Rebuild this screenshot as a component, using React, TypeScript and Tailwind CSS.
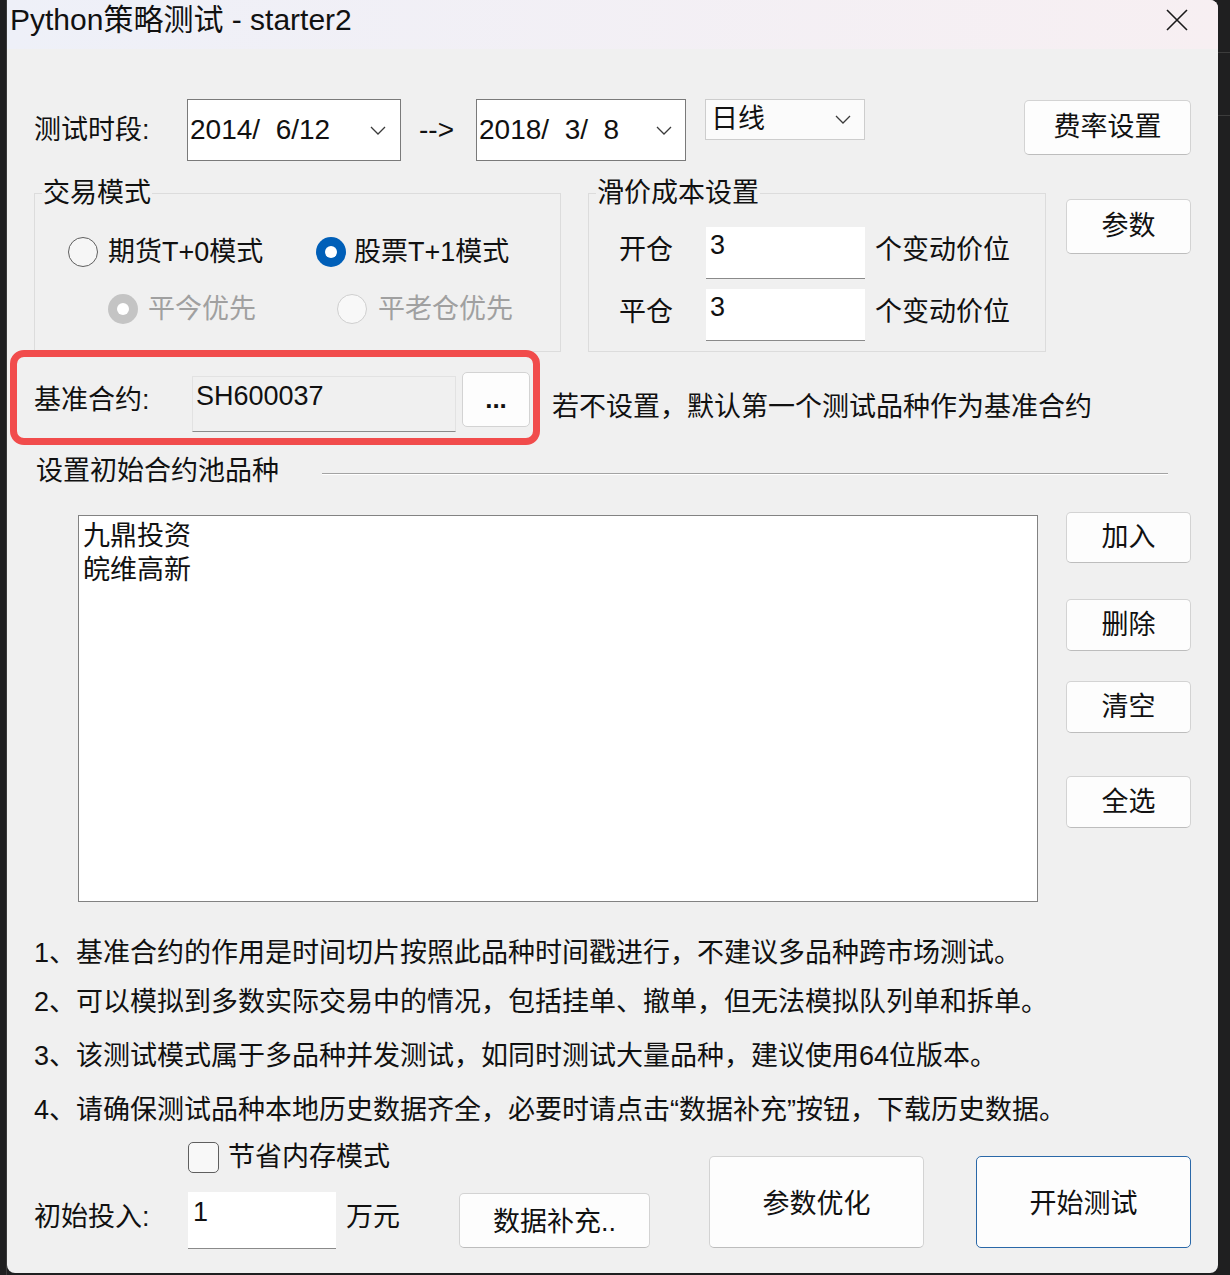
import React from 'react';

const FONT = "font-['Liberation_Sans','Noto_Sans_CJK_SC',sans-serif]";

function Chevron() {
  return (
    <svg width="16" height="9" viewBox="0 0 16 9">
      <polyline points="1,1 8,8 15,1" fill="none" stroke="#3a3a3a" strokeWidth="1.3" />
    </svg>
  );
}

function Btn({ label, className }: { label: string; className: string }) {
  return (
    <button
      className={`${className} bg-[#fdfdfd] border border-[#d3d3d3] border-b-[#bdbdbd] rounded-[5px] text-[27px] text-[#111] flex items-center justify-center`}
    >
      {label}
    </button>
  );
}

function Radio({ checked, disabled }: { checked?: boolean; disabled?: boolean }) {
  if (checked) {
    return (
      <span
        className={`w-[30px] h-[30px] rounded-full flex items-center justify-center shrink-0 ${
          disabled ? 'bg-[#c4c4c4]' : 'bg-[#005fb8]'
        }`}
      >
        <span className="w-[12px] h-[12px] rounded-full bg-white" />
      </span>
    );
  }
  return (
    <span
      className={`w-[30px] h-[30px] rounded-full shrink-0 border-[1.5px] ${
        disabled ? 'border-[#cfcfcf] bg-[#f8f8f8]' : 'border-[#5f5f5f] bg-[#f6f6f6]'
      }`}
    />
  );
}

function SlipRow({ label, mt }: { label: string; mt: string }) {
  return (
    <div className={`flex items-center ${mt} pl-[30px]`}>
      <span className="w-[87px] text-[27px] -mt-[6px]">{label}</span>
      <div className="w-[159px] h-[52px] bg-white border-b border-[#8a8a8a] pl-[4px] pt-[3px] text-[27px] leading-[30px]">
        3
      </div>
      <span className="ml-[10px] text-[27px] -mt-[6px]">个变动价位</span>
    </div>
  );
}

export default function App() {
  return (
    <div className={`w-[1230px] h-[1275px] bg-[#1f1f20] flex ${FONT} text-[#111]`}>
      <div className="w-[7px] shrink-0 border-r border-[#3a3a3a]" />

      <div className="w-[1211px] h-[1273px] shrink-0 bg-[#f0f0f0] rounded-tr-[8px] rounded-b-[8px] overflow-hidden flex flex-col">
        {/* title bar */}
        <div className="h-[49px] flex items-start justify-between bg-linear-to-r from-[#eef0f8] to-[#f7eff2]">
          <span className="pl-[3px] pt-[3px] text-[30px] leading-[34px]">Python策略测试 - starter2</span>
          <svg width="22" height="22" viewBox="0 0 22 22" className="mt-[9px] mr-[30px]">
            <path d="M1 1 L21 21 M21 1 L1 21" stroke="#1a1a1a" strokeWidth="1.6" />
          </svg>
        </div>

        {/* date range row */}
        <div className="flex items-start mt-[50px] pl-[27px]">
          <span className="w-[153px] h-[62px] flex items-center text-[27px]">测试时段:</span>
          <div className="w-[214px] h-[62px] bg-white border border-[#7a7a7a] flex items-center justify-between pl-[2px] pr-[14px]">
            <span className="text-[28px] whitespace-pre">2014/  6/12</span>
            <Chevron />
          </div>
          <span className="w-[75px] h-[62px] flex items-center pl-[18px] text-[28px]">--&gt;</span>
          <div className="w-[210px] h-[62px] bg-white border border-[#7a7a7a] flex items-center justify-between pl-[2px] pr-[13px]">
            <span className="text-[28px] whitespace-pre">2018/  3/  8</span>
            <Chevron />
          </div>
          <div className="ml-[19px] w-[160px] h-[41px] bg-[#fbfbfb] border border-[#cdcdcd] flex items-center justify-between pl-[5px] pr-[13px]">
            <span className="text-[27px]">日线</span>
            <Chevron />
          </div>
          <Btn label="费率设置" className="ml-[159px] mt-[1px] w-[167px] h-[55px]" />
        </div>

        {/* group boxes */}
        <div className="flex items-start mt-[17px] pl-[27px]">
          <fieldset className="w-[527px] h-[174px] border border-[#dcdcdc]">
            <legend className="ml-[7px] px-[1px] text-[27px] leading-[30px]">交易模式</legend>
            <div className="flex items-center mt-[29px] pl-[33px] leading-[30px]">
              <div className="w-[248px] flex items-center gap-[10px]">
                <Radio />
                <span className="text-[27px]">期货T+0模式</span>
              </div>
              <div className="flex items-center gap-[8px]">
                <Radio checked />
                <span className="text-[27px]">股票T+1模式</span>
              </div>
            </div>
            <div className="flex items-center mt-[27px] pl-[73px] leading-[30px] text-[#a0a0a0]">
              <div className="w-[229px] flex items-center gap-[10px]">
                <Radio checked disabled />
                <span className="text-[27px]">平今优先</span>
              </div>
              <div className="flex items-center gap-[11px]">
                <Radio disabled />
                <span className="text-[27px]">平老仓优先</span>
              </div>
            </div>
          </fieldset>

          <fieldset className="ml-[27px] w-[458px] h-[174px] border border-[#dcdcdc]">
            <legend className="ml-[7px] px-[1px] text-[27px] leading-[30px]">滑价成本设置</legend>
            <SlipRow label="开仓" mt="mt-[19px]" />
            <SlipRow label="平仓" mt="mt-[10px]" />
          </fieldset>

          <Btn label="参数" className="ml-[20px] mt-[21px] w-[125px] h-[55px]" />
        </div>

        {/* base contract row */}
        <div className="flex items-start -mt-[2px] pl-[3px]">
          <div className="w-[530px] h-[95px] border-[7px] border-[#f14c4c] rounded-[14px] flex items-start pl-[17px]">
            <span className="w-[158px] mt-[23px] text-[27px]">基准合约:</span>
            <div className="mt-[19px] w-[264px] h-[56px] border border-[#e2e2e2] border-b-[#8a8a8a] pl-[3px] pt-[4px] text-[27px] leading-[30px]">
              SH600037
            </div>
            <button className="ml-[6px] mt-[15px] w-[68px] h-[55px] bg-[#fdfdfd] border border-[#d3d3d3] rounded-[5px] text-[26px] font-bold flex items-center justify-center">
              ...
            </button>
          </div>
          <span className="ml-[12px] mt-[37px] text-[27px]">若不设置，默认第一个测试品种作为基准合约</span>
        </div>

        {/* pool separator */}
        <div className="flex items-center mt-[8px] h-[36px] pl-[29px]">
          <span className="w-[286px] text-[27px]">设置初始合约池品种</span>
          <div className="w-[846px] h-[2px] border-t border-b border-t-[#a3a3a3] border-b-white mt-[6px]" />
        </div>

        {/* list + buttons */}
        <div className="flex items-start mt-[23px] pl-[71px]">
          <div className="mt-[3px] w-[960px] h-[387px] bg-white border border-[#828282] pl-[4px] pt-[3px] text-[27px] leading-[34px]">
            <div>九鼎投资</div>
            <div>皖维高新</div>
          </div>
          <div className="ml-[28px] flex flex-col">
            <Btn label="加入" className="w-[125px] h-[51px]" />
            <Btn label="删除" className="mt-[36px] w-[125px] h-[52px]" />
            <Btn label="清空" className="mt-[30px] w-[125px] h-[52px]" />
            <Btn label="全选" className="mt-[43px] w-[125px] h-[52px]" />
          </div>
        </div>

        {/* notes */}
        <div className="flex flex-col pl-[27px] text-[27px]">
          <p className="mt-[31px] h-[40px] leading-[40px]">1、基准合约的作用是时间切片按照此品种时间戳进行，不建议多品种跨市场测试。</p>
          <p className="mt-[9px] h-[40px] leading-[40px]">2、可以模拟到多数实际交易中的情况，包括挂单、撤单，但无法模拟队列单和拆单。</p>
          <p className="mt-[14px] h-[40px] leading-[40px]">3、该测试模式属于多品种并发测试，如同时测试大量品种，建议使用64位版本。</p>
          <p className="mt-[14px] h-[40px] leading-[40px]">4、请确保测试品种本地历史数据齐全，必要时请点击“数据补充”按钮，下载历史数据。</p>
        </div>

        {/* bottom */}
        <div className="flex items-start pl-[27px]">
          <div className="w-[425px] flex flex-col">
            <div className="mt-[12px] pl-[154px] flex items-center gap-[9px] leading-[31px]">
              <span className="w-[31px] h-[31px] rounded-[5px] border-[1.5px] border-[#5f5f5f] bg-[#f8f8f8]" />
              <span className="text-[27px]">节省内存模式</span>
            </div>
            <div className="mt-[19px] flex items-center">
              <span className="w-[154px] text-[27px] -mt-[6px]">初始投入:</span>
              <div className="w-[148px] h-[57px] bg-white border-b border-[#8a8a8a] pl-[5px] pt-[5px] text-[27px] leading-[30px]">
                1
              </div>
              <span className="ml-[10px] text-[27px] -mt-[6px]">万元</span>
            </div>
          </div>
          <Btn label="数据补充.." className="mt-[63px] w-[191px] h-[55px] pt-[4px]" />
          <Btn label="参数优化" className="ml-[59px] mt-[26px] w-[215px] h-[92px] pt-[4px]" />
          <button className="ml-[52px] mt-[26px] w-[215px] h-[92px] pt-[4px] bg-[#fdfdfd] border border-[#2a68a8] rounded-[5px] text-[27px] flex items-center justify-center">
            开始测试
          </button>
        </div>
      </div>

      <div className="flex-1 flex flex-col">
        <div className="mt-[52px] h-px bg-[#3c3c3c]" />
        <div className="mt-[62px] h-px bg-[#3c3c3c]" />
      </div>
    </div>
  );
}
